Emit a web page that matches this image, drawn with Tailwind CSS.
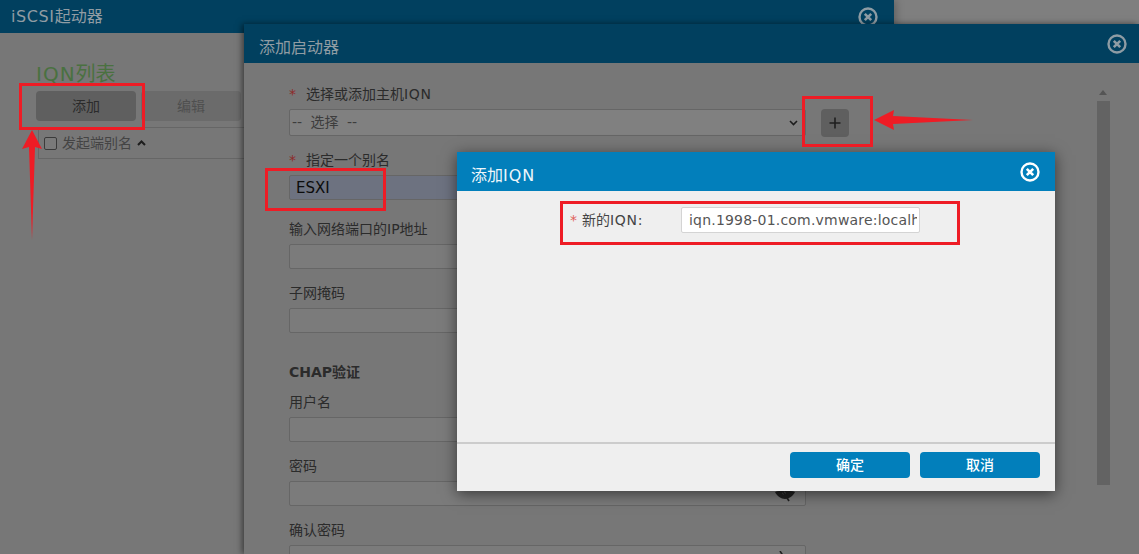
<!DOCTYPE html>
<html lang="zh">
<head>
    <meta charset="UTF-8">
    <title>添加IQN</title>
    <script src="https://cdn.jsdelivr.net/npm/@tailwindcss/browser@4"></script>
</head>
<body class="relative w-[1139px] h-[554px] overflow-hidden bg-[#7f7f7f] font-['DejaVu_Sans','Noto_Sans_CJK_SC',sans-serif] text-[14px] text-[#2b2b2b]">

<!-- iSCSI window -->
<div class="absolute left-0 top-0 w-[894px] h-[554px] bg-[#777777] shadow-[2px_0_8px_rgba(0,0,0,0.25)]">
    <div class="h-[33px] bg-[#01405f] flex items-center justify-between pl-[11px] pr-[15px]">
        <span class="text-[16px] text-[#909ca3]"><span class="tracking-[0.6px]">iSCSI</span>起动器</span>
        <svg width="22" height="22" viewBox="0 0 22 22" fill="none" stroke="#8e9ca4"><circle cx="11" cy="11" r="8.5" stroke-width="2.4"/><path d="M7.8 7.8l6.4 6.4M14.2 7.8l-6.4 6.4" stroke-width="2.6"/></svg>
    </div>
    <div class="pl-[36px] pt-[28px]">
        <div class="text-[20px] leading-[26px] text-[#4a7140]"><span class="tracking-[1px]">IQN</span>列表</div>
        <div class="flex gap-[5px] mt-[4px]">
            <div class="w-[100px] h-[30px] rounded-[4px] bg-[#5f5f5f] flex items-center justify-center text-[#2b2b2b]">添加</div>
            <div class="w-[100px] h-[30px] rounded-[4px] bg-[#6b6b6b] flex items-center justify-center text-[#4f4f4f]">编辑</div>
        </div>
        <div class="ml-[2px] mt-[6px] w-[300px] h-[32px] border border-[#666666] flex items-center pl-[5px] text-[#444444]">
            <span class="w-[13px] h-[13px] mr-[5px] rounded-[2px] border border-[#3a3a3a] bg-[#7a7a7a]"></span>发起端别名
            <svg class="ml-[5px]" width="9" height="6" viewBox="0 0 9 6" fill="none" stroke="#1d1d1d" stroke-width="2"><path d="M1 5l3.5-3.5L8 5"/></svg>
        </div>
    </div>
</div>

<!-- add initiator dialog -->
<div class="absolute left-[244px] top-[24px] w-[895px] h-[530px] bg-[#777777] shadow-[-2px_0_6px_rgba(0,0,0,0.5)]">
    <div class="h-[39px] bg-[#01405f] flex items-center justify-between pl-[15px] pr-[11px]">
        <span class="text-[16px] pt-[8px] text-[#909ca3]">添加启动器</span>
        <svg width="22" height="22" viewBox="0 0 22 22" fill="none" stroke="#8e9ca4"><circle cx="11" cy="11" r="8.5" stroke-width="2.4"/><path d="M7.8 7.8l6.4 6.4M14.2 7.8l-6.4 6.4" stroke-width="2.6"/></svg>
    </div>
    <div class="pl-[45px] w-[562px]">
        <div class="h-[46px] pt-[21px] leading-[20px]"><span class="text-[#8e2a2a] mr-[10px]">*</span>选择或添加主机<span class="tracking-[0.7px]">IQN</span></div>
        <div class="relative h-[27px] w-[517px] rounded-[2px] border border-[#666666] bg-[#808080] pl-[2px] flex items-center justify-between pr-[7px] text-[#3d3d3d]">
            <span class="[word-spacing:4px]">-- 选择 --</span>
            <svg width="9" height="6" viewBox="0 0 9 6" fill="none" stroke="#1d1d1d" stroke-width="1.6"><path d="M1 1l3.5 3.5L8 1"/></svg>
            <div class="absolute left-[531px] top-[-1px] w-[28px] h-[28px] rounded-[4px] bg-[#5f5f5f] flex items-center justify-center">
                <svg width="14" height="14" viewBox="0 0 14 14" stroke="#1f1f1f" stroke-width="1.6"><path d="M7 1.5v11M1.5 7h11"/></svg>
            </div>
        </div>
        <div class="h-[39px] pt-[14px] leading-[20px]"><span class="text-[#8e2a2a] mr-[10px]">*</span>指定一个别名</div>
        <div class="h-[25px] w-[517px] rounded-[2px] border border-[#666666] bg-[#6d7280] pl-[6px] pt-[2px] flex items-center text-[15px] text-[#0c0c0c]">ESXI</div>
        <div class="h-[44px] pt-[19px] leading-[20px]">输入网络端口的IP地址</div>
        <div class="h-[25px] w-[517px] rounded-[2px] border border-[#666666] bg-[#7b7b7b]"></div>
        <div class="h-[39px] pt-[14px] leading-[20px]">子网掩码</div>
        <div class="h-[25px] w-[517px] rounded-[2px] border border-[#666666] bg-[#7b7b7b]"></div>
        <div class="h-[48px] pt-[29px] leading-[20px] font-bold">CHAP验证</div>
        <div class="h-[36px] pt-[11px] leading-[20px]">用户名</div>
        <div class="h-[25px] w-[517px] rounded-[2px] border border-[#666666] bg-[#7b7b7b]"></div>
        <div class="h-[39px] pt-[14px] leading-[20px]">密码</div>
        <div class="relative h-[25px] w-[517px] rounded-[2px] border border-[#666666] bg-[#7b7b7b]">
            <svg class="absolute right-[9px] top-[5px]" width="22" height="15" viewBox="0 0 22 15" fill="none"><path d="M1 5C5 3 17 3 21 5C19 9 15 12 11 12C7 12 3 9 1 5Z" fill="#1f1f1f"/><circle cx="10" cy="6" r="1.6" fill="#5a5a5a"/><path d="M6 0L15 14" stroke="#1f1f1f" stroke-width="1.6"/></svg>
        </div>
        <div class="h-[39px] pt-[14px] leading-[20px]">确认密码</div>
        <div class="relative h-[25px] w-[517px] rounded-[2px] border border-[#666666] bg-[#7b7b7b]">
            <svg class="absolute right-[9px] top-[5px]" width="22" height="15" viewBox="0 0 22 15" fill="none"><path d="M1 5C5 3 17 3 21 5C19 9 15 12 11 12C7 12 3 9 1 5Z" fill="#1f1f1f"/><circle cx="10" cy="6" r="1.6" fill="#5a5a5a"/><path d="M6 0L15 14" stroke="#1f1f1f" stroke-width="1.6"/></svg>
        </div>
    </div>
    <!-- scrollbar -->
    <div class="absolute left-[855px] top-[66px] w-0 h-0 border-x-[4px] border-x-transparent border-b-[5px] border-b-[#555555]"></div>
    <div class="absolute left-[853px] top-[77px] w-[13px] h-[384px] bg-[#636363]"></div>
</div>

<!-- add IQN dialog -->
<div class="absolute left-[457px] top-[152px] w-[598px] h-[339px] bg-[#efefef] shadow-[0_3px_14px_rgba(0,0,0,0.55)] flex flex-col">
    <div class="h-[39px] shrink-0 bg-[#027fbb] flex items-center justify-between pl-[14px] pr-[14px]">
        <span class="text-[16px] pt-[8px] text-[#eef6fa]">添加<span class="tracking-[1px]">IQN</span></span>
        <svg width="22" height="22" viewBox="0 0 22 22" fill="none" stroke="#ffffff"><circle cx="11" cy="11" r="8.5" stroke-width="2.4"/><path d="M7.8 7.8l6.4 6.4M14.2 7.8l-6.4 6.4" stroke-width="2.6"/></svg>
    </div>
    <div class="flex-1 flex items-start pl-[113px] pt-[16px] text-[#444444]">
        <div class="w-[111px] h-[26px] flex items-center"><span class="text-[#e0605a] mr-[5px]">*</span>新的<span class="tracking-[0.7px]">IQN:</span></div>
        <div class="w-[239px] h-[26px] rounded-[2px] border border-[#d4d4d4] bg-white pl-[7px] pr-[2px] flex items-center text-[#555555]">
            <span class="block w-full overflow-hidden whitespace-nowrap tracking-[0.2px]">iqn.1998-01.com.vmware:localhost</span>
        </div>
    </div>
    <div class="h-[49px] shrink-0 border-t-2 border-[#cccccc] flex justify-end gap-[10px] pt-[8px] pr-[15px]">
        <button class="w-[120px] h-[26px] rounded-[4px] bg-[#027fbb] text-white text-[14px] font-medium">确定</button>
        <button class="w-[120px] h-[26px] rounded-[4px] bg-[#027fbb] text-white text-[14px] font-medium">取消</button>
    </div>
</div>

<!-- red annotations -->
<svg class="absolute left-0 top-0" width="1139" height="554" viewBox="0 0 1139 554" fill="none">
    <g stroke="#ee1c25" stroke-width="3">
        <rect x="20.5" y="84.5" width="123" height="44"/>
        <rect x="803.5" y="97.5" width="68" height="48"/>
        <rect x="266.5" y="169.5" width="118" height="40"/>
        <rect x="561.5" y="202.5" width="397" height="41"/>
    </g>
    <path d="M32 130L42 149L35 147L32 240L29 147L22 149Z" fill="#ee1c25"/>
    <path d="M874 120L894 110L893 116L973 120L893 124L894 130Z" fill="#ee1c25"/>
</svg>

</body>
</html>
